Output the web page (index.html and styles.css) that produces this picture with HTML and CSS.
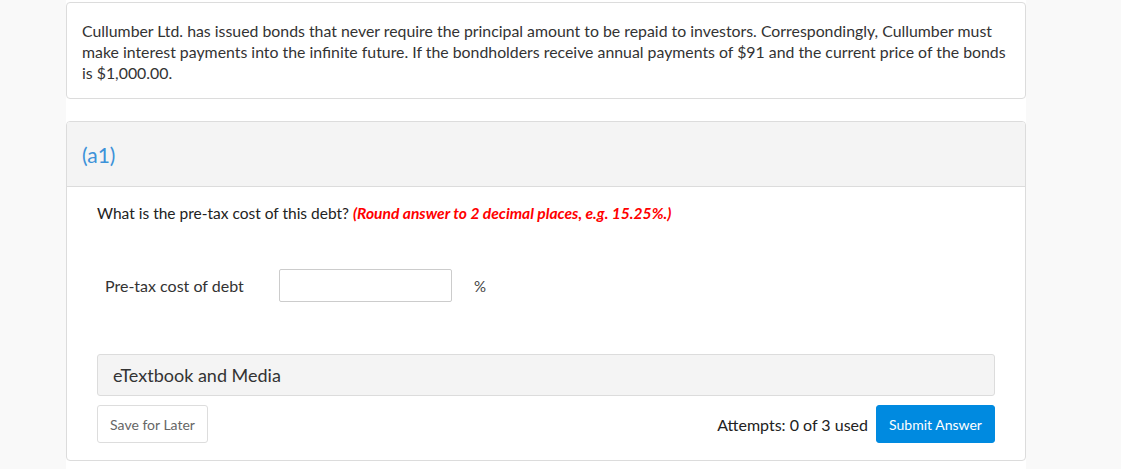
FILE: index.html
```html
<!DOCTYPE html>
<html>
<head>
<meta charset="utf-8">
<link rel="stylesheet" href="styles.css">
</head>
<body>
<div class="page">
  <div class="card intro">
    <p>Cullumber Ltd. has issued bonds that never require the principal amount to be repaid to investors. Correspondingly, Cullumber must make interest payments into the infinite future. If the bondholders receive annual payments of $91 and the current price of the bonds is $1,000.00.</p>
  </div>
  <div class="card part">
    <div class="part-head">(a1)</div>
    <div class="part-body">
      <p class="question">What is the pre-tax cost of this debt? <span class="hint">(Round answer to 2 decimal places, e.g. 15.25%.)</span></p>
      <div class="answer-row">
        <label class="answer-label">Pre-tax cost of debt</label>
        <input class="answer-input" type="text">
        <span class="unit">%</span>
      </div>
      <div class="media">eTextbook and Media</div>
      <div class="actions">
        <button class="btn btn-save">Save for Later</button>
        <div class="submit-group">
          <span class="attempts">Attempts: 0 of 3 used</span>
          <button class="btn btn-submit">Submit Answer</button>
        </div>
      </div>
    </div>
  </div>
</div>
</body>
</html>
```
FILE: styles.css
```css
html, body {
  margin: 0;
  padding: 0;
  background: #f9f9f9;
  font-family: Lato, "Open Sans", sans-serif;
  color: #333;
}
.page {
  margin-left: 66px;
  width: 960px;
  background: #fff;
  padding-top: 2px;
  min-height: 467px;
}
.card {
  border: 1px solid #dcdcdc;
  border-radius: 4px;
  background: #fff;
}
.intro {
  padding: 17px 10px 15px 15px;
}
.intro p {
  margin: 0;
  font-size: 15.85px;
  line-height: 21px;
  color: #333;
}
.part {
  margin-top: 22px;
  overflow: hidden;
}
.part-head {
  background: #f4f4f4;
  border-bottom: 1px solid #dcdcdc;
  height: 64px;
  display: flex;
  align-items: center;
  padding-left: 15px;
  font-size: 21px;
  color: #3c92d9;
}
.part-body {
  padding: 16px 30px 17px 30px;
}
.question {
  margin: 0;
  font-size: 15.5px;
  line-height: 21px;
  color: #222;
}
.hint {
  color: #f00;
  font-weight: bold;
  font-style: italic;
  font-size: 15.6px;
}
.answer-row {
  display: flex;
  align-items: center;
  margin-top: 45px;
  padding-left: 8px;
}
.answer-label {
  font-size: 16px;
  color: #333;
  width: 174px;
}
.answer-input {
  width: 173px;
  height: 33px;
  box-sizing: border-box;
  border: 1px solid #ccc;
  border-radius: 2px;
  margin: 0;
  padding: 0 6px;
  font: inherit;
}
.unit {
  margin-left: 22px;
  font-size: 15px;
  color: #444;
}
.media {
  margin-top: 52px;
  height: 42px;
  box-sizing: border-box;
  background: #f4f4f4;
  border: 1px solid #dcdcdc;
  border-radius: 3px;
  display: flex;
  align-items: center;
  padding-left: 15px;
  font-size: 18px;
  color: #333;
}
.actions {
  display: flex;
  justify-content: space-between;
  align-items: center;
  margin-top: 9px;
}
.btn {
  height: 38px;
  box-sizing: border-box;
  border-radius: 3px;
  font-family: Lato, "Open Sans", sans-serif;
  font-size: 14px;
  cursor: pointer;
  padding: 0;
}
.btn-save {
  width: 111px;
  background: #fff;
  border: 1px solid #ddd;
  color: #666;
}
.submit-group {
  display: flex;
  align-items: center;
  gap: 8px;
}
.attempts {
  font-size: 16px;
  color: #222;
}
.btn-submit {
  width: 119px;
  background: #008ae0;
  border: 1px solid #008ae0;
  color: #fff;
}
```
